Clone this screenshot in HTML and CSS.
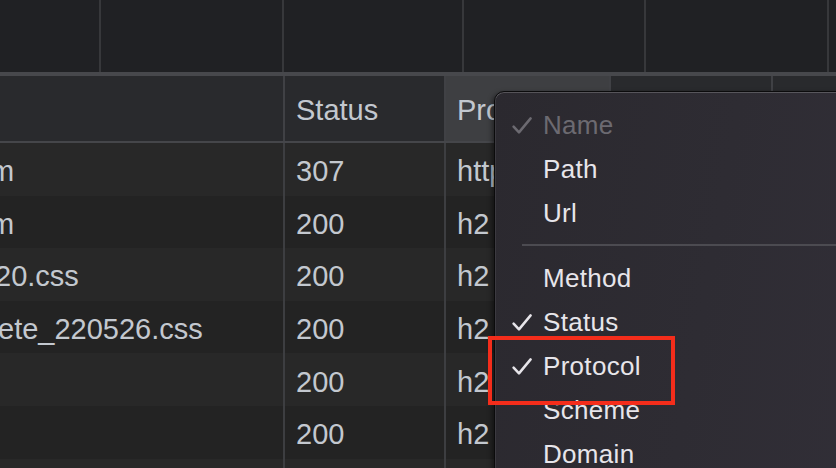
FILE: index.html
```html
<!DOCTYPE html>
<html>
<head>
<meta charset="utf-8">
<link rel="stylesheet" href="styles.css">
</head>
<body>
<div class="screen">
  <div class="timeline">
    <div class="tick w1"></div>
    <div class="tick w2"></div>
    <div class="tick w3"></div>
    <div class="tick w4"></div>
    <div class="tick w5"></div>
    <div class="tick last"></div>
  </div>
  <div class="splitter"></div>
  <div class="table">
    <div class="row head">
      <div class="cell name"></div>
      <div class="cell">Status</div>
      <div class="cell active">Protocol</div>
      <div class="cell"></div>
      <div class="cell"></div>
    </div>
    <div class="row odd">
      <div class="cell name"><span class="clip cut-10">m</span></div>
      <div class="cell">307</div>
      <div class="cell">http/1.1</div>
      <div class="cell"></div>
      <div class="cell"></div>
    </div>
    <div class="row even">
      <div class="cell name"><span class="clip cut-10">m</span></div>
      <div class="cell">200</div>
      <div class="cell">h2</div>
      <div class="cell"></div>
      <div class="cell"></div>
    </div>
    <div class="row odd">
      <div class="cell name"><span class="clip cut-5">20.css</span></div>
      <div class="cell">200</div>
      <div class="cell">h2</div>
      <div class="cell"></div>
      <div class="cell"></div>
    </div>
    <div class="row even">
      <div class="cell name"><span class="clip cut-2">ete_220526.css</span></div>
      <div class="cell">200</div>
      <div class="cell">h2</div>
      <div class="cell"></div>
      <div class="cell"></div>
    </div>
    <div class="row odd">
      <div class="cell name"></div>
      <div class="cell">200</div>
      <div class="cell">h2</div>
      <div class="cell"></div>
      <div class="cell"></div>
    </div>
    <div class="row even">
      <div class="cell name"></div>
      <div class="cell">200</div>
      <div class="cell">h2</div>
      <div class="cell"></div>
      <div class="cell"></div>
    </div>
    <div class="row odd">
      <div class="cell name"></div>
      <div class="cell"></div>
      <div class="cell"></div>
      <div class="cell"></div>
      <div class="cell"></div>
    </div>
  </div>

  <div class="menu">
    <div class="item disabled">
      <span class="check"><svg width="20" height="17" viewBox="0 0 20 17"><polyline points="1.6,9.6 7,15.4 18.6,1.4" fill="none" stroke="currentColor" stroke-width="2.5" stroke-linecap="round" stroke-linejoin="round"/></svg></span>
      <span class="label">Name</span>
    </div>
    <div class="item"><span class="check"></span><span class="label">Path</span></div>
    <div class="item"><span class="check"></span><span class="label">Url</span></div>
    <div class="menu-sep"></div>
    <div class="item"><span class="check"></span><span class="label">Method</span></div>
    <div class="item">
      <span class="check"><svg width="20" height="17" viewBox="0 0 20 17"><polyline points="1.6,9.6 7,15.4 18.6,1.4" fill="none" stroke="currentColor" stroke-width="2.5" stroke-linecap="round" stroke-linejoin="round"/></svg></span>
      <span class="label">Status</span>
    </div>
    <div class="item">
      <span class="check"><svg width="20" height="17" viewBox="0 0 20 17"><polyline points="1.6,9.6 7,15.4 18.6,1.4" fill="none" stroke="currentColor" stroke-width="2.5" stroke-linecap="round" stroke-linejoin="round"/></svg></span>
      <span class="label">Protocol</span>
    </div>
    <div class="item"><span class="check"></span><span class="label">Scheme</span></div>
    <div class="item"><span class="check"></span><span class="label">Domain</span></div>
  </div>

  <div class="annotation"></div>
</div>
</body>
</html>
```

FILE: styles.css
```css
* { box-sizing: border-box; }

html, body {
  margin: 0;
  padding: 0;
  background: #232323;
}

body {
  font-family: "Liberation Sans", Arial, Helvetica, sans-serif;
}

.screen {
  position: relative;
  width: 836px;
  height: 468px;
  overflow: hidden;
  background: #232323;
}

/* timeline strip at top */
.timeline {
  display: grid;
  grid-template-columns: 101px 183px 180px 182px 183px 1fr;
  height: 72px;
  background: #202124;
}

.tick {
  border-right: 2px solid #37383b;
}

.tick.last {
  border-right: none;
}

.splitter {
  height: 4px;
  background: #47484c;
}

/* table */
.table {
  display: flex;
  flex-direction: column;
}

.row {
  display: grid;
  grid-template-columns: 283px 161px 165px 162px 1fr;
  height: 52.6px;
  font-size: 29px;
  color: #c3c8cf;
}

.row.head {
  height: 67px;
  background: #292a2d;
  border-bottom: 2px solid #45464a;
}

.row.odd { background: #282828; }
.row.even { background: #232323; }

.cell {
  display: flex;
  align-items: center;
  padding-left: 11px;
  padding-top: 5px;
  white-space: nowrap;
  overflow: hidden;
  border-left: 2px solid #3d3e41;
}

.row.head .cell {
  padding-top: 4px;
  border-left-color: #404145;
}

.cell.name {
  border-left: none;
  padding-left: 0;
}

.cell.active {
  background: #3e3f42;
}

.clip { display: inline-block; }
.cut-10 { margin-left: -10px; }
.cut-5 { margin-left: -5px; }
.cut-2 { margin-left: -2px; }

/* context menu */
.menu {
  position: absolute;
  left: 494px;
  top: 91px;
  width: 420px;
  height: 420px;
  padding-top: 11px;
  border: 1px solid #0b0b0c;
  border-radius: 10px;
  background: linear-gradient(100deg, #2b292f 0%, #2e2c33 50%, #322f38 100%);
  box-shadow: inset 0 1px 0 rgba(255, 255, 255, 0.2), inset 1px 0 0 rgba(255, 255, 255, 0.08), -2px 2px 5px rgba(0, 0, 0, 0.45);
  color: #e7e5ea;
  font-size: 26px;
  letter-spacing: 0.3px;
}

.item {
  display: flex;
  align-items: center;
  height: 44px;
}

.item.disabled {
  color: #6c6a71;
}

.check {
  display: flex;
  align-items: center;
  width: 48px;
  padding-left: 17px;
  padding-top: 1px;
}

.label {
  line-height: 1;
}

.menu-sep {
  height: 21px;
  display: flex;
  align-items: center;
  padding-left: 27px;
}

.menu-sep::before {
  content: "";
  display: block;
  width: 100%;
  height: 2px;
  margin-top: -2px;
  background: #4c4b51;
}

/* red annotation box */
.annotation {
  position: absolute;
  left: 488px;
  top: 336px;
  width: 187px;
  height: 69px;
  border: 4px solid #f42d1b;
}
```
